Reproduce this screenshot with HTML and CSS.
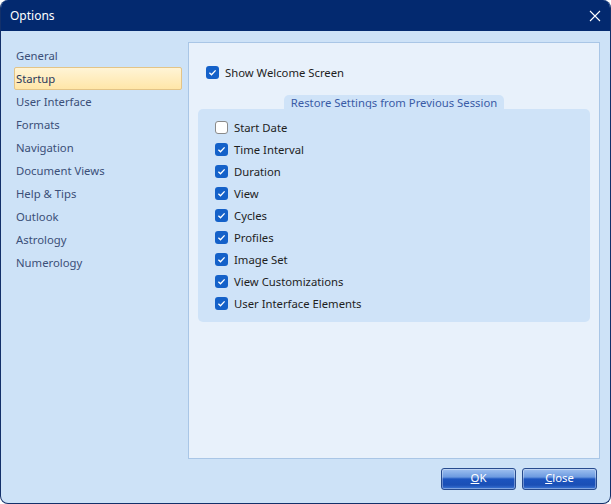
FILE: index.html
```html
<!DOCTYPE html>
<html lang="en">
<head>
  <meta charset="utf-8"/>
  <title>Options</title>
  <link rel="stylesheet" href="styles.css">
</head>
<body>
  <div class="window">
    <div class="titlebar">
      <span class="title">Options</span>
      <svg class="close" width="12" height="12" viewBox="0 0 12 12"><path d="M1 1 L11 11 M11 1 L1 11" stroke="#fff" stroke-width="1.1"/></svg>
    </div>

    <div class="content">
      <ul class="nav">
        <li>General</li>
        <li class="selected">Startup</li>
        <li>User Interface</li>
        <li>Formats</li>
        <li>Navigation</li>
        <li>Document Views</li>
        <li>Help &amp; Tips</li>
        <li>Outlook</li>
        <li>Astrology</li>
        <li>Numerology</li>
      </ul>

      <div class="panel">
        <label class="check top-check"><span class="box on"><svg viewBox="0 0 13 13"><path d="M3.4 6.8 L5.5 8.8 L9.6 4.4" fill="none" stroke="#fff" stroke-width="1.3"/></svg></span>Show Welcome Screen</label>

        <div class="group">
          <div class="group-tab">Restore Settings from Previous Session</div>
          <div class="group-body">
            <label class="check"><span class="box"></span>Start Date</label>
            <label class="check"><span class="box on"><svg viewBox="0 0 13 13"><path d="M3.4 6.8 L5.5 8.8 L9.6 4.4" fill="none" stroke="#fff" stroke-width="1.3"/></svg></span>Time Interval</label>
            <label class="check"><span class="box on"><svg viewBox="0 0 13 13"><path d="M3.4 6.8 L5.5 8.8 L9.6 4.4" fill="none" stroke="#fff" stroke-width="1.3"/></svg></span>Duration</label>
            <label class="check"><span class="box on"><svg viewBox="0 0 13 13"><path d="M3.4 6.8 L5.5 8.8 L9.6 4.4" fill="none" stroke="#fff" stroke-width="1.3"/></svg></span>View</label>
            <label class="check"><span class="box on"><svg viewBox="0 0 13 13"><path d="M3.4 6.8 L5.5 8.8 L9.6 4.4" fill="none" stroke="#fff" stroke-width="1.3"/></svg></span>Cycles</label>
            <label class="check"><span class="box on"><svg viewBox="0 0 13 13"><path d="M3.4 6.8 L5.5 8.8 L9.6 4.4" fill="none" stroke="#fff" stroke-width="1.3"/></svg></span>Profiles</label>
            <label class="check"><span class="box on"><svg viewBox="0 0 13 13"><path d="M3.4 6.8 L5.5 8.8 L9.6 4.4" fill="none" stroke="#fff" stroke-width="1.3"/></svg></span>Image Set</label>
            <label class="check"><span class="box on"><svg viewBox="0 0 13 13"><path d="M3.4 6.8 L5.5 8.8 L9.6 4.4" fill="none" stroke="#fff" stroke-width="1.3"/></svg></span>View Customizations</label>
            <label class="check"><span class="box on"><svg viewBox="0 0 13 13"><path d="M3.4 6.8 L5.5 8.8 L9.6 4.4" fill="none" stroke="#fff" stroke-width="1.3"/></svg></span>User Interface Elements</label>
          </div>
        </div>
      </div>
    </div>

    <div class="footer">
      <button class="btn"><u>O</u>K</button>
      <button class="btn"><u>C</u>lose</button>
    </div>
  </div>
</body>
</html>
```

FILE: styles.css
```css
body {
  margin: 0;
  font-family: "Noto Sans", "Open Sans", sans-serif;
  font-size: 11.3px;
  background: #fff;
}
.window {
  width: 611px;
  height: 504px;
  box-sizing: border-box;
  background: #cde2f7;
  border: 1px solid #13306a;
  border-top: none;
  border-radius: 8px;
  overflow: hidden;
  display: flex;
  flex-direction: column;
}
.titlebar {
  height: 31px;
  background: #03296f;
  display: flex;
  align-items: center;
  justify-content: space-between;
  padding: 0 9px 0 9px;
  flex-shrink: 0;
}
.title {
  color: #fff;
  font-size: 12px;
}
.close {
  display: block;
}
.content {
  display: flex;
  gap: 6px;
  padding: 11px 10px 0 13px;
}
.nav {
  list-style: none;
  margin: 2px 0 0 0;
  padding: 0;
  width: 168px;
}
.nav li {
  height: 21px;
  line-height: 21px;
  padding-left: 1px;
  border: 1px solid transparent;
  border-radius: 2px;
  color: #3b4f78;
}
.nav li.selected {
  border-color: #e3c487;
  background: linear-gradient(#fff4d6, #ffe6a8);
  color: #2b3a5c;
}
.panel {
  flex: 1;
  height: 415px;
  background: #e8f1fb;
  border: 1px solid #a9c6e6;
}
.check {
  display: flex;
  align-items: center;
  height: 22px;
  color: #1e1e1e;
}
.box {
  width: 11px;
  height: 11px;
  border: 1px solid #8a8a8a;
  border-radius: 3px;
  background: #fff;
  margin-right: 6px;
  flex-shrink: 0;
}
.box.on {
  width: 13px;
  height: 13px;
  border: none;
  background: #1461c9;
}
.box svg {
  display: block;
  width: 13px;
  height: 13px;
}
.top-check {
  margin: 18px 0 0 17px;
}
.group {
  margin: 12px 9px 0 9px;
  display: flex;
  flex-direction: column;
  align-items: center;
}
.group-tab {
  background: #cfe3f8;
  color: #3a5ba6;
  padding: 0 7px;
  height: 14px;
  line-height: 16px;
  border-radius: 5px 5px 0 0;
}
.group-body {
  align-self: stretch;
  background: #cfe3f8;
  border-radius: 5px;
  padding: 7px 0 8px 17px;
}
.footer {
  display: flex;
  justify-content: flex-end;
  gap: 6px;
  padding: 9px 13px 0 0;
}
.btn {
  width: 75px;
  height: 22px;
  border: 1px solid #274b8e;
  border-radius: 3px;
  background: linear-gradient(#9fc0f0 0%, #6c9ae0 40%, #1c54bf 50%, #1a4fb6 80%, #3f78d6 100%);
  color: #fff;
  font-family: "Noto Sans", "Open Sans", sans-serif;
  font-size: 11.3px;
  line-height: 18px;
  padding: 0 0 2px 0;
  box-shadow: inset 0 0 0 1px rgba(255,255,255,0.35);
}
```
